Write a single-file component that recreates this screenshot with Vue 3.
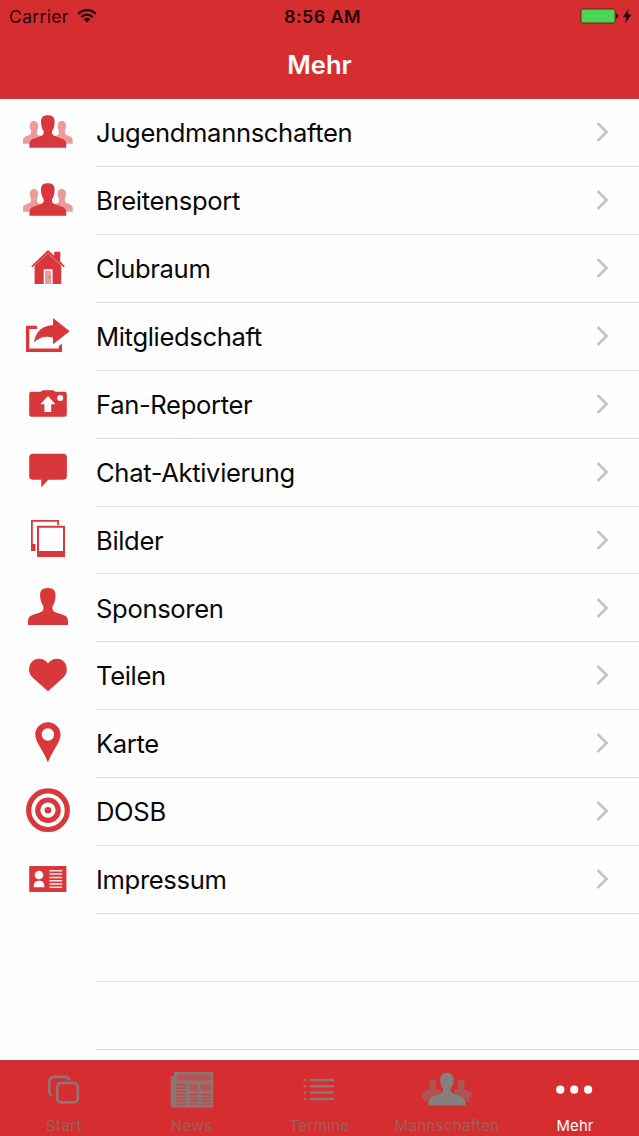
<script setup>
import { ref } from 'vue';

const items = [
  { title: 'Jugendmannschaften', icon: 'group' },
  { title: 'Breitensport', icon: 'group' },
  { title: 'Clubraum', icon: 'house' },
  { title: 'Mitgliedschaft', icon: 'share' },
  { title: 'Fan-Reporter', icon: 'camera' },
  { title: 'Chat-Aktivierung', icon: 'chat' },
  { title: 'Bilder', icon: 'pictures' },
  { title: 'Sponsoren', icon: 'person' },
  { title: 'Teilen', icon: 'heart' },
  { title: 'Karte', icon: 'pin' },
  { title: 'DOSB', icon: 'target' },
  { title: 'Impressum', icon: 'card' }
];

const tabs = ['Start', 'News', 'Termine', 'Mannschaften', 'Mehr'];
const activeTab = ref('Mehr');
</script>

<template>
  <div class="screen">
    <header class="header">
      <div class="status-bar">
        <div class="carrier">
          <span>Carrier</span>
          <svg class="wifi" width="20" height="14" viewBox="0 0 20 14">
            <path d="M1.2 4.9C6.2-.1 13.8-.1 18.8 4.9M4.3 8.1C7.6 4.9 12.4 4.9 15.7 8.1" fill="none" stroke="currentColor" stroke-width="2.3" />
            <path d="M6.6 10.2C8.6 8.3 11.4 8.3 13.4 10.2L10 13.6Z" fill="currentColor" />
          </svg>
        </div>
        <span class="time">8:56 AM</span>
        <div class="power">
          <svg width="52" height="18" viewBox="0 0 52 18">
            <rect x="1" y="2" width="34" height="14" rx="1.8" fill="#4cd455" stroke="#5a2b12" stroke-width="1" />
            <path d="M36 6.2Q38.4 7.2 38.4 9T36 11.8Z" fill="#3a0808" />
            <path d="M48.8 1.8L42.8 10.2H46.6L44.9 16.4L51.6 7.4H47.7Z" fill="#1c0505" />
          </svg>
        </div>
      </div>
      <h1>Mehr</h1>
    </header>

    <ul class="list">
      <li v-for="item in items" :key="item.title" class="row">
        <svg class="icon" width="96" height="68" viewBox="0 0 96 68">
          <g v-if="item.icon === 'group'">
            <path class="light" d="M34 22C31 22 29.7 24 29.9 27C29.9 29 30.5 30.5 31 31.6V34.5C30 37 23 36.5 23 41V44.7H45V38L39 36.4Q37 35.8 37 34.5V31.6C37.8 30 38.2 29 38.2 27C38.2 24 37 22 34 22Z" />
            <path class="light" d="M61.8 22C58.8 22 57.6 24 57.7 27C57.7 29 58.2 30.5 58.9 31.6V34.5Q58.9 35.8 57 36.4L51 38V44.7H72.7V41C72.7 36.5 65.9 37 64.9 34.5V31.6C65.6 30 66 29 66 27C66 24 64.8 22 61.8 22Z" />
            <path d="M47.8 16.3C42.5 16.3 40.9 19 41 23C41.1 27.5 42.3 30.5 43.7 32.3V34.6Q43.2 36.4 40.5 37.3L33.5 39.7Q29.4 41 29.4 45V48.8H66.2V45Q66.2 41 62.1 39.7L55.1 37.3Q52.4 36.4 52 34.6V32.3C53.4 30.5 54.5 27.5 54.6 23C54.7 19 53.1 16.3 47.8 16.3Z" />
          </g>
          <g v-else-if="item.icon === 'house'">
            <path d="M48 15L54.2 20.7V16.8H60.3V26.6L64.8 31.3L63.6 32.3L48 18.2L32.4 32.3L31.2 31.3Z" />
            <path d="M48 18.4L61.2 30.4V49H52.6V34.3H43.7V49H34.6V30.5Z" />
            <rect class="light" x="45" y="35.7" width="6" height="13.3" />
            <circle cx="49.8" cy="42.3" r=".7" />
          </g>
          <g v-else-if="item.icon === 'share'">
            <path d="M26 22.7H37V26H29.3V45.6H58.8V43L62 40.8V49H26Z" />
            <path d="M53 15L69.7 28.3L53 41.2V34.4C44 32.8 39.5 34.3 34 39.5C36 27.5 42.5 22.5 53 22.2Z" />
          </g>
          <g v-else-if="item.icon === 'camera'">
            <path d="M31.5 20.8H40.5L43 19.2H53L55.5 20.8H64.5Q66.8 20.8 66.8 23V43.5Q66.8 45.8 64.5 45.8H31.5Q29.2 45.8 29.2 43.5V23Q29.2 20.8 31.5 20.8Z" />
            <path class="white" d="M48 25L55.4 33.3H51.2V41H44.4V33.3H40.4Z" />
            <circle class="white" cx="60.2" cy="27.1" r="3" />
          </g>
          <path v-else-if="item.icon === 'chat'" d="M33 14.7H63Q66.9 14.7 66.9 18.5V37Q66.9 40.8 63 40.8H48.2L41.3 48.5V40.8H33Q29.2 40.8 29.2 37V18.5Q29.2 14.7 33 14.7Z" />
          <g v-else-if="item.icon === 'pictures'">
            <path d="M31 13H59V18H57.2V14.8H32.8V37H35.5V44H31Z" />
            <path fill-rule="evenodd" d="M37 18.7H65V50H37ZM39 20.7V44H63V20.7Z" />
          </g>
          <path v-else-if="item.icon === 'person'" d="M47.8 13C41.8 13 39.9 16 40.1 20.5C40 25 41.8 29 43.4 31V34.2Q43 36.4 40 37.4L32.4 40Q28 41.6 28 46V50H68V46Q68 41.6 63.6 40L56 37.4Q53 36.4 52.5 34.2V31C54.2 29 55.6 25 55.5 20.5C55.7 16 53.8 13 47.8 13Z" />
          <path v-else-if="item.icon === 'heart'" d="M48 48.2L32.5 34.5C29.8 32 29.1 29.5 29.1 26.3C29.1 20.2 33.3 15.7 39 15.7C43 15.7 46 17.2 48 20.6C50 17.2 53 15.7 57 15.7C62.7 15.7 66.8 20.2 66.8 26.3C66.8 29.5 66.1 32 63.4 34.5Z" />
          <path v-else-if="item.icon === 'pin'" fill-rule="evenodd" d="M47.9 11.2C40.8 11.2 35.2 16.8 35.2 23.8C35.2 28.5 38.3 33 41 37.7Q45 44 47.9 51.3Q50.8 44 54.8 37.7C57.5 33 60.6 28.5 60.6 23.8C60.6 16.8 55 11.2 47.9 11.2ZM47.9 17.3A6.2 6.2 0 1 1 47.9 29.7A6.2 6.2 0 1 1 47.9 17.3Z" />
          <g v-else-if="item.icon === 'target'">
            <circle class="ring" cx="48" cy="31.2" r="19.3" />
            <circle class="ring" cx="48" cy="31.2" r="10.2" />
            <circle cx="48" cy="31.2" r="3.3" />
          </g>
          <g v-else>
            <rect x="29.2" y="19" width="37.2" height="26" rx=".8" />
            <circle class="white" cx="39" cy="28" r="4.3" />
            <path class="white" d="M33.6 40.3C33.6 35 36 33.7 39 33.7S44.4 35 44.4 40.3Z" />
            <path class="lines" d="M49.5 23.8H62.2M49.5 27.1H62.2M49.5 30.4H62.2M49.5 33.7H62.2M49.5 37H62.2M49.5 40.3H62.2" />
          </g>
        </svg>
        <div class="cell">
          <span class="title">{{ item.title }}</span>
          <svg class="chevron" width="14" height="22" viewBox="0 0 14 22">
            <path d="M1.5 2L10.6 11L1.5 20" />
          </svg>
        </div>
      </li>
      <li v-for="n in 2" :key="'empty' + n" class="row empty">
        <div class="cell"></div>
      </li>
    </ul>

    <nav class="tabs">
      <div v-for="tab in tabs" :key="tab" class="tab" :class="{ active: activeTab === tab }" @click="activeTab = tab">
        <svg width="60" height="46" viewBox="0 0 60 46">
          <g v-if="tab === 'Start'" fill="none" stroke="currentColor" stroke-width="2.6">
            <path d="M18 27.4Q15.2 26.5 15.2 23V14Q15.2 8.9 20.5 8.9H30Q34.4 8.9 35.8 12.5" />
            <rect x="23.2" y="15" width="20.6" height="19.4" rx="3.8" />
          </g>
          <g v-else-if="tab === 'News'">
            <path d="M12 3.9H51.2V39.6H10.5Q8.7 39.6 8.7 37.8V8.2H12Z" fill="currentColor" />
            <path class="cut" d="M15 6.5H48.6V12.5H15ZM38.8 16.2H48.6V23H38.8ZM27.2 16.2H35.8V23H27.2Z" />
            <path class="cut-line" d="M14 17H24M14 20.2H24M14 23.4H24M14 26.6H24M14 29.8H24M14 33H24M14 36.2H24M27.2 26.6H35.8M27.2 29.8H35.8M27.2 33H35.8M27.2 36.2H35.8M38.8 26.6H48.6M38.8 29.8H48.6M38.8 33H48.6M38.8 36.2H48.6" />
          </g>
          <path v-else-if="tab === 'Termine'" d="M20.5 12H45M20.5 18.3H45M20.5 24.6H45M20.5 30.9H45M14.5 12H17M14.5 18.3H17M14.5 24.6H17M14.5 30.9H17" fill="none" stroke="currentColor" stroke-width="2.5" />
          <g v-else-if="tab === 'Mannschaften'" fill="currentColor">
            <path opacity=".55" d="M12.5 11.5H19V22H24V30H11V33H7V30H5V24H9V22H12.5ZM41 11.5H47.5V22H51V24H54.5V30H52V33H49V30H37V22H41Z" />
            <path class="gray" d="M29.8 4.7C24.8 4.7 23.1 8 23.2 12C23.2 16 24.6 19 26 20.4V23.2Q25.5 25 23 26L15.6 28.5Q11.5 30 11.5 34V37.5H48.4V34Q48.4 30 44.3 28.5L36.9 26Q34.4 25 33.6 23.2V20.4C35.2 19 36.6 16 36.6 12C36.6 8 34.8 4.7 29.8 4.7Z" />
          </g>
          <g v-else fill="currentColor">
            <circle cx="15.3" cy="21.7" r="4.1" />
            <circle cx="29.2" cy="21.7" r="4.1" />
            <circle cx="43.1" cy="21.7" r="4.1" />
          </g>
        </svg>
        <span>{{ tab }}</span>
      </div>
    </nav>
  </div>
</template>

<style>
body {
  margin: 0;
  background: #fff;
}
</style>

<style scoped>
.screen {
  display: flex;
  flex-direction: column;
  width: 639px;
  height: 1136px;
  overflow: hidden;
  background: #fefefe;
  color: #080808;
  font-family: Inter, "Liberation Sans", sans-serif;
}

.header {
  flex: none;
  box-sizing: border-box;
  height: 99px;
  background: #d62d30;
  border-bottom: 1px solid #c9393a;
}

.status-bar {
  display: grid;
  grid-template-columns: 1fr auto 1fr;
  align-items: center;
  height: 32px;
  padding: 0 7px 0 9px;
  color: #240606;
  font-size: 17.5px;
}

.carrier {
  display: flex;
  align-items: center;
  gap: 8px;
  letter-spacing: 0.35px;
}

.wifi {
  margin-bottom: 1px;
}

.time {
  padding-left: 4px;
  font-size: 17.9px;
  font-weight: 600;
  letter-spacing: 0.45px;
}

.power {
  display: flex;
  justify-content: flex-end;
}

h1 {
  margin: 0;
  color: #fff;
  font-size: 25.5px;
  font-weight: 600;
  line-height: 66px;
  text-align: center;
}

.list {
  flex: 1;
  min-height: 0;
  margin: 0;
  padding: 0;
  overflow: hidden;
  list-style: none;
}

.row {
  display: flex;
  height: 67.93px;
}

.row.empty {
  padding-left: 96px;
}

.icon {
  flex: none;
  margin-top: 0.4px;
  fill: #d8383b;
}

.light {
  fill: #ec9b9c;
}

.white {
  fill: #fff;
}

.ring {
  fill: none;
  stroke: #d8383b;
  stroke-width: 5.2;
}

.lines {
  fill: none;
  stroke: #fbe3e3;
  stroke-width: 1.5;
}

.cell {
  display: flex;
  flex: 1;
  align-items: center;
  justify-content: space-between;
  box-sizing: border-box;
  padding-right: 29px;
  border-bottom: 1px solid #dfdde1;
}

.title {
  padding-top: 1.2px;
  font-size: 25.6px;
  line-height: 34px;
  letter-spacing: -0.35px;
}

.chevron {
  margin-bottom: 0.8px;
  fill: none;
  stroke: #c3c2c6;
  stroke-width: 2.5;
}

.tabs {
  display: grid;
  grid-template-columns: repeat(5, 1fr);
  flex: none;
  box-sizing: border-box;
  height: 76px;
  border-top: 1px solid #b9393a;
  background: #d62d30;
}

.tab {
  display: flex;
  flex-direction: column;
  align-items: center;
  padding-top: 7px;
  color: #8c7674;
  font-size: 14.8px;
  line-height: 20px;
  letter-spacing: 0.45px;
}

.tab svg {
  flex: none;
}

.tab span {
  padding-top: 2px;
  color: #a15d5a;
}

.tab.active,
.tab.active span {
  color: #fff;
}

.tab.active span {
  letter-spacing: 0.2px;
}

.gray {
  fill: #85807e;
}

.cut {
  fill: #b75452;
}

.cut-line {
  fill: none;
  stroke: #c9413f;
  stroke-width: 1.3;
}
</style>
